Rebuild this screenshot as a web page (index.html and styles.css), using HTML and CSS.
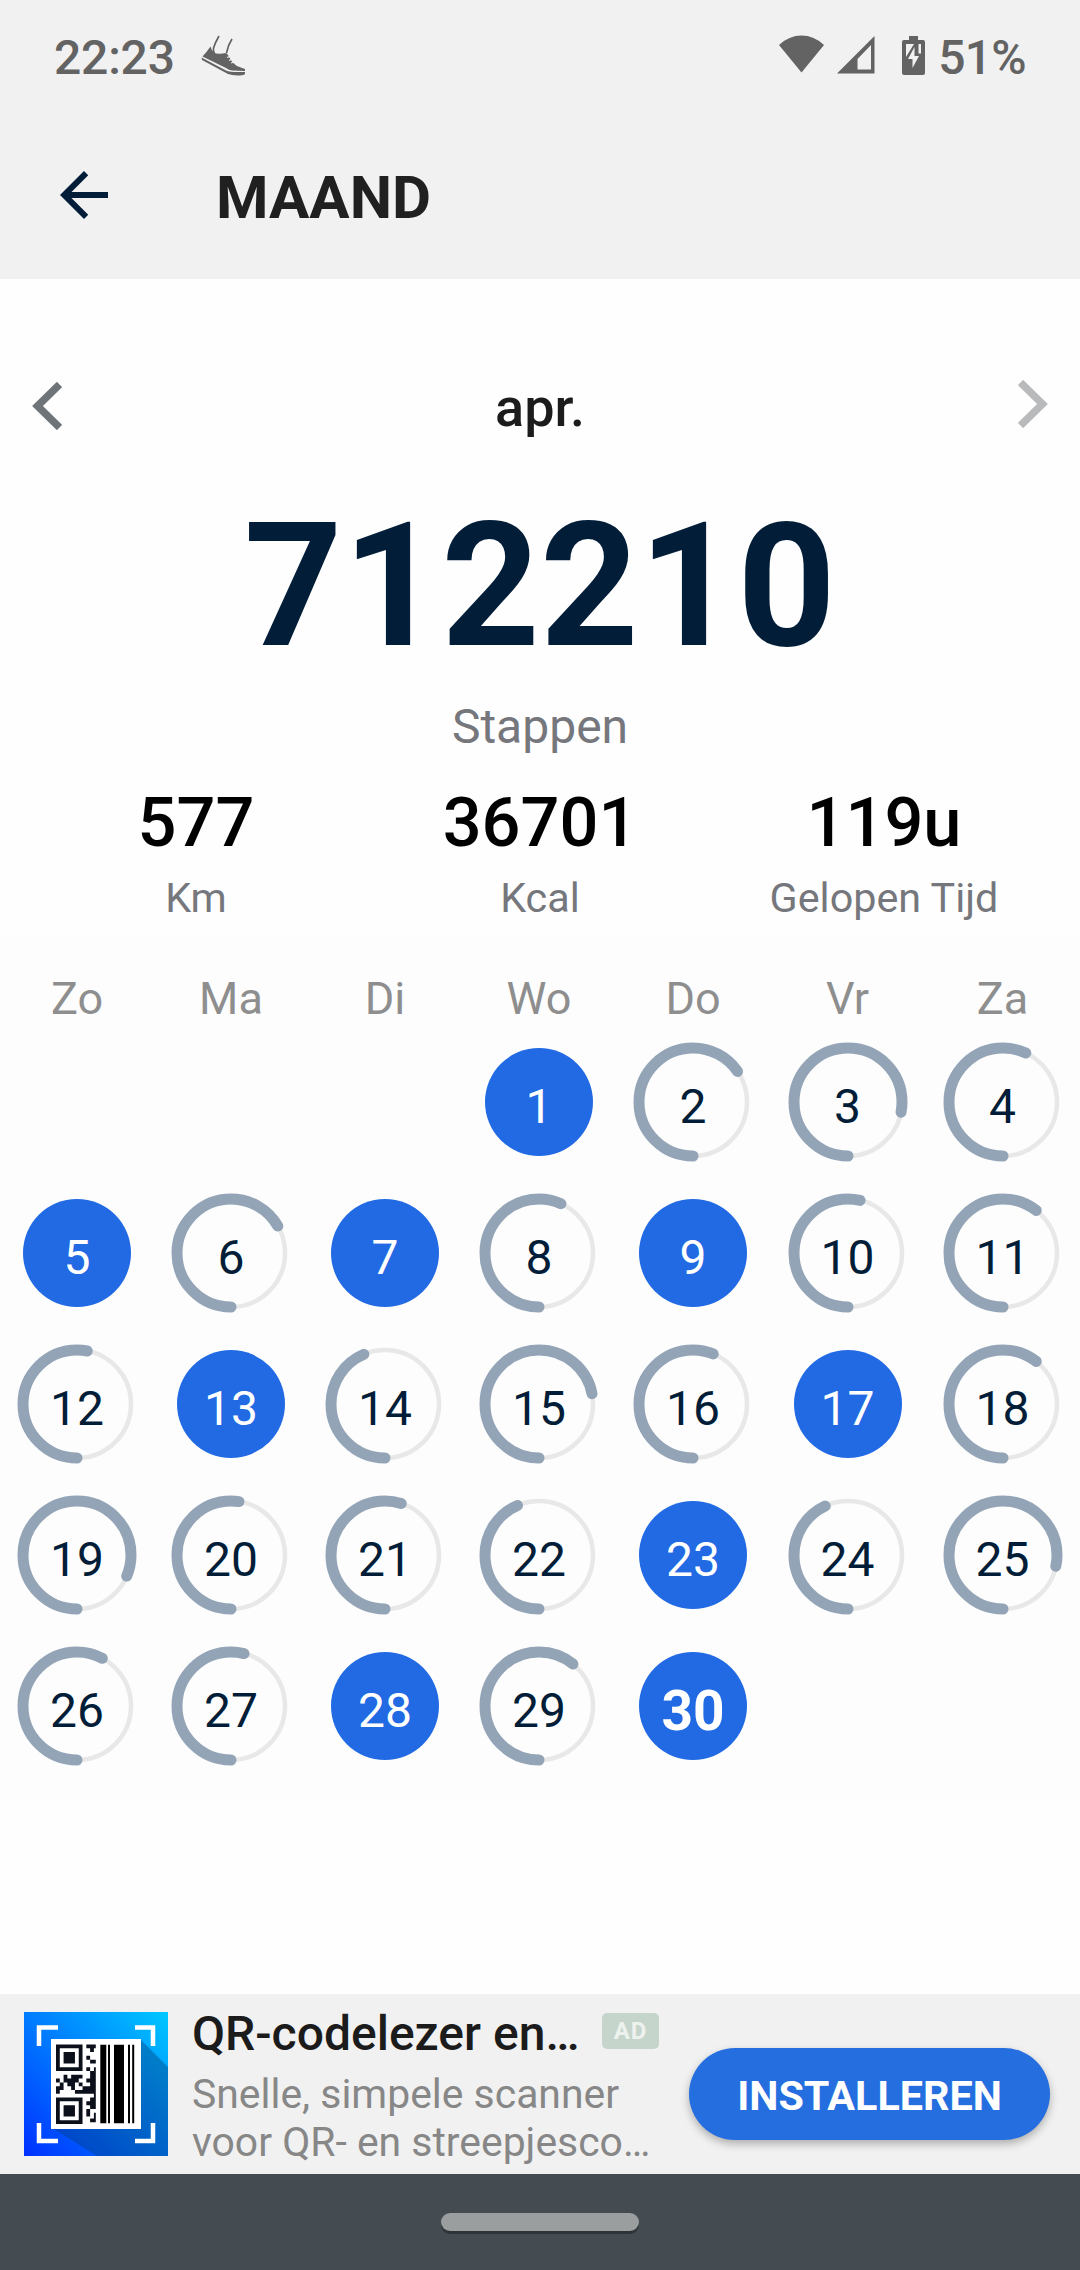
FILE: index.html
```html
<!DOCTYPE html>
<html lang="nl">
<head>
<meta charset="utf-8">
<title>Maand</title>
<link rel="stylesheet" href="styles.css">
</head>
<body>
<header class="top">
  <div class="status">
    <span class="time">22:23</span>
    <svg class="shoe" viewBox="0 0 45 42" width="45" height="42">
      <path d="M18 1Q14 8 12.500 13Q12 16 13.500 18M31 4Q27 10 25.500 18" fill="none" stroke="#636363" stroke-width="1.700"/>
      <path d="M9.500 11.500Q11 17 15 18.500Q20 19 25 18L27 20Q31 28 36 31Q41 33 44 34V36L31 35.500Q28 35 25 33L1.500 21.500Q5 18 9.500 11.500Z" fill="#636363"/>
      <path d="M26 22.500L31 20.500M28 25.500L33 23.500M30 28L35 26.500" stroke="#f1f1f1" stroke-width="1.100"/>
      <path d="M0.500 22.500L25 35.500Q29 37.500 44 37V38.500Q44 40 41 40.300Q32 41 27 39L1 25Z" fill="#636363"/>
    </svg>
    <span class="grow"></span>
    <svg class="wifi" viewBox="0 0 45 38" width="45" height="38"><path d="M0 10Q10 .5 22.500 .5T45 10L22.500 37.500Z" fill="#636363"/></svg>
    <svg class="signal" viewBox="0 0 38 38" width="38" height="38"><path fill-rule="evenodd" d="M37.500 0V37.500H0ZM34 9L20.500 23V33.500H34Z" fill="#636363"/></svg>
    <svg class="battery" viewBox="0 0 23 39" width="23" height="39"><path d="M7 0H16V4H21Q23 4 23 6V37Q23 39 21 39H2Q0 39 0 37V6Q0 4 2 4H7Z" fill="#636363"/><path d="M4 8H12L4 21ZM16.500 8H19V17.500H16.500Z" fill="#f1f1f1"/><path d="M12.500 11V20H17L10.500 32V23H6Z" fill="#f1f1f1"/></svg>
    <span class="pct">51%</span>
  </div>
  <div class="appbar">
    <svg viewBox="0 0 24 24" width="72" height="72"><path d="M20 11H7.830l5.590-5.590L12 4l-8 8 8 8 1.410-1.410L7.830 13H20z" fill="#021d38"/></svg>
    <h1>MAAND</h1>
  </div>
</header>
<main>
  <div class="month">
    <svg class="prev" viewBox="0 0 30 48" width="30" height="48"><path d="M27.500 2.500L5.500 24L27.500 45.500" fill="none" stroke="#6f7479" stroke-width="7.500"/></svg>
    <span>apr.</span>
    <svg class="next" viewBox="0 0 30 48" width="30" height="48"><path d="M2.500 2.500L24.500 24L2.500 45.500" fill="none" stroke="#b9babc" stroke-width="7.500"/></svg>
  </div>
  <div class="total">712210</div>
  <div class="unit">Stappen</div>
  <div class="stats">
    <div><b>577</b><span>Km</span></div>
    <div><b>36701</b><span>Kcal</span></div>
    <div><b>119u</b><span>Gelopen Tijd</span></div>
  </div>
  <section class="calendar">
    <div class="weekdays"><span>Zo</span><span>Ma</span><span>Di</span><span>Wo</span><span>Do</span><span>Vr</span><span>Za</span></div>
    <div class="days">
      <div class="day first full"><span>1</span></div>
      <div class="day"><svg viewBox="-60 -60 120 120"><circle r="54"/><circle class="arc" r="54" pathLength="360" stroke-dasharray="235.500 360"/></svg><span>2</span></div>
      <div class="day"><svg viewBox="-60 -60 120 120"><circle r="54"/><circle class="arc" r="54" pathLength="360" stroke-dasharray="281 360"/></svg><span>3</span></div>
      <div class="day"><svg viewBox="-60 -60 120 120"><circle r="54"/><circle class="arc" r="54" pathLength="360" stroke-dasharray="205 360"/></svg><span>4</span></div>
      <div class="day full"><span>5</span></div>
      <div class="day"><svg viewBox="-60 -60 120 120"><circle r="54"/><circle class="arc" r="54" pathLength="360" stroke-dasharray="240 360"/></svg><span>6</span></div>
      <div class="day full"><span>7</span></div>
      <div class="day"><svg viewBox="-60 -60 120 120"><circle r="54"/><circle class="arc" r="54" pathLength="360" stroke-dasharray="204 360"/></svg><span>8</span></div>
      <div class="day full"><span>9</span></div>
      <div class="day"><svg viewBox="-60 -60 120 120"><circle r="54"/><circle class="arc" r="54" pathLength="360" stroke-dasharray="193 360"/></svg><span>10</span></div>
      <div class="day"><svg viewBox="-60 -60 120 120"><circle r="54"/><circle class="arc" r="54" pathLength="360" stroke-dasharray="218 360"/></svg><span>11</span></div>
      <div class="day"><svg viewBox="-60 -60 120 120"><circle r="54"/><circle class="arc" r="54" pathLength="360" stroke-dasharray="191 360"/></svg><span>12</span></div>
      <div class="day full"><span>13</span></div>
      <div class="day"><svg viewBox="-60 -60 120 120"><circle r="54"/><circle class="arc" r="54" pathLength="360" stroke-dasharray="157 360"/></svg><span>14</span></div>
      <div class="day"><svg viewBox="-60 -60 120 120"><circle r="54"/><circle class="arc" r="54" pathLength="360" stroke-dasharray="259 360"/></svg><span>15</span></div>
      <div class="day"><svg viewBox="-60 -60 120 120"><circle r="54"/><circle class="arc" r="54" pathLength="360" stroke-dasharray="202 360"/></svg><span>16</span></div>
      <div class="day full"><span>17</span></div>
      <div class="day"><svg viewBox="-60 -60 120 120"><circle r="54"/><circle class="arc" r="54" pathLength="360" stroke-dasharray="218 360"/></svg><span>18</span></div>
      <div class="day"><svg viewBox="-60 -60 120 120"><circle r="54"/><circle class="arc" r="54" pathLength="360" stroke-dasharray="293 360"/></svg><span>19</span></div>
      <div class="day"><svg viewBox="-60 -60 120 120"><circle r="54"/><circle class="arc" r="54" pathLength="360" stroke-dasharray="188.500 360"/></svg><span>20</span></div>
      <div class="day"><svg viewBox="-60 -60 120 120"><circle r="54"/><circle class="arc" r="54" pathLength="360" stroke-dasharray="197.500 360"/></svg><span>21</span></div>
      <div class="day"><svg viewBox="-60 -60 120 120"><circle r="54"/><circle class="arc" r="54" pathLength="360" stroke-dasharray="156.500 360"/></svg><span>22</span></div>
      <div class="day full"><span>23</span></div>
      <div class="day"><svg viewBox="-60 -60 120 120"><circle r="54"/><circle class="arc" r="54" pathLength="360" stroke-dasharray="155 360"/></svg><span>24</span></div>
      <div class="day"><svg viewBox="-60 -60 120 120"><circle r="54"/><circle class="arc" r="54" pathLength="360" stroke-dasharray="282 360"/></svg><span>25</span></div>
      <div class="day"><svg viewBox="-60 -60 120 120"><circle r="54"/><circle class="arc" r="54" pathLength="360" stroke-dasharray="208 360"/></svg><span>26</span></div>
      <div class="day"><svg viewBox="-60 -60 120 120"><circle r="54"/><circle class="arc" r="54" pathLength="360" stroke-dasharray="194 360"/></svg><span>27</span></div>
      <div class="day full"><span>28</span></div>
      <div class="day"><svg viewBox="-60 -60 120 120"><circle r="54"/><circle class="arc" r="54" pathLength="360" stroke-dasharray="219 360"/></svg><span>29</span></div>
      <div class="day full today"><span>30</span></div>
    </div>
  </section>
</main>
<aside class="ad">
  <svg class="adicon" viewBox="0 0 144 144" width="144" height="144">
    <defs><linearGradient id="g" x1="0" y1="1" x2="1" y2="0"><stop offset="0" stop-color="#0030ff"/><stop offset="1" stop-color="#00c8ff"/></linearGradient></defs>
    <rect width="144" height="144" fill="url(#g)"/>
    <path d="M117 28L144 55V144H73L28 116Z" fill="#003c78" fill-opacity=".4"/>
    <path d="M15 34V15.500H34M111 15.500H129V34M15 111V129H34M111 129H129V111" fill="none" stroke="#fff" stroke-width="4.500"/>
    <rect x="27" y="27" width="90" height="90" fill="#fff"/>
    <!-- QR modules on an 11 x 21 grid -->
    <g transform="translate(32 32.500) scale(3.790)" fill="#0b101a">
      <path fill-rule="evenodd" d="M0 0h7v7h-7zM1 1v5h5v-5zM2 2h3v3h-3zM0 14h7v7h-7zM1 15v5h5v-5zM2 16h3v3h-3z"/>
      <path d="M8 0h2.500v1h-.5v1h-1v-1h-1zM8 3h1v1h1.500v1h-1.500v-1h-1zM8 6h1v1h-1zM10 6h.5v2h-1.500v-1h1zM2 8h1v1h1v-1h3v1h-1v1h1v1h-1v-1h-1v1h-2v-1h-1v1h-1v-1h-1v-1h1v1h1zM8 9h1v-1h1.500v9h-.5v-1h-2v-1h1v-1h1v-1h-5v-1h-1v-1h1v1h2v-1h2v-1h-1zM0 11h2v1h-1v1h-1v-1h0zM9 16h1v1h-1v1h-1v-1h1zM8 18h1v1h-1zM10 18h.5v2.500h-1.500v-1h1z"/>
    </g>
    <path d="M76.300 32.800h6v78.500h-6zM84 32.800h2v78.500h-2zM90 32.800h10v78.500h-10zM104 32.800h2v78.500h-2zM108.200 32.800h2v78.500h-2z"/>
  </svg>
  <div class="adtext">
    <div class="adtitle"><span>QR-codelezer en…</span><em>AD</em></div>
    <p>Snelle, simpele scanner<br>voor QR- en streepjesco…</p>
  </div>
  <a class="install">INSTALLEREN</a>
</aside>
<nav class="navbar"><i></i></nav>
</body>
</html>
```

FILE: styles.css
```css
* { box-sizing: border-box; }
body { margin: 0; width: 1080px; height: 2270px; display: flex; flex-direction: column; background: #fff; font-family: Roboto, "Liberation Sans", sans-serif; overflow: hidden; }
svg { display: block; flex: none; }
.top { height: 279px; background: #f1f1f1; }
.status { height: 115px; padding: 0 54px 0 54px; display: flex; align-items: flex-start; color: #636363; font-size: 48px; font-weight: 500; line-height: 56px; letter-spacing: -.7px; }
.status span { margin-top: 30px; }
.status .time { letter-spacing: -.2px; }
.shoe { margin: 35px 0 0 26px; }
.grow { flex: 1; }
.wifi { margin-top: 35px; }
.signal { margin: 36px 0 0 13px; }
.battery { margin: 36px 13px 0 27px; }
.appbar { height: 164px; display: flex; align-items: center; padding: 0 0 4px 48px; }
.appbar h1 { margin: 6px 0 0 96px; font-size: 60px; line-height: 70px; font-weight: 700; color: #202020; }
main { height: 1715px; background: #fefefe; }
.month { height: 190px; padding: 101px 32px 0; display: flex; justify-content: space-between; align-items: flex-start; }
.month span { font-size: 54px; line-height: 64px; font-weight: 500; color: #1c1c1c; margin-top: -4px; }
.prev { margin-top: 2px; }
.total { height: 202px; line-height: 202px; font-size: 172px; font-weight: 700; color: #021d38; text-align: center; margin-top: 16px; }
.unit { height: 56px; line-height: 56px; margin-top: 12px; font-size: 48px; color: #75777c; text-align: center; }
.stats { display: grid; grid-template-columns: repeat(3, 344px); justify-content: center; height: 180px; padding-top: 28px; text-align: center; }
.stats b { display: block; font-size: 68.5px; line-height: 80px; font-weight: 500; color: #000; }
.stats span { display: block; font-size: 41.3px; line-height: 50px; margin-top: 10px; color: #75777c; }
.calendar { height: 866px; background: #fdfdfd; }
.weekdays, .days { display: grid; grid-template-columns: repeat(5, 154px) 155px 155px; text-align: center; }
.weekdays { height: 91px; padding-top: 37px; font-size: 45px; line-height: 54px; color: #8e8e8e; }
.days { grid-auto-rows: 151px; }
.first { grid-column: 4; }
.day { display: grid; place-items: center; font-size: 48px; line-height: 56px; color: #021d38; }
.day > * { grid-area: 1 / 1; }
.day svg { width: 120px; height: 120px; }
.day svg circle { fill: none; stroke: #e8e8e8; stroke-width: 4.5; }
.day svg .arc { stroke: #94a4b7; stroke-width: 11; stroke-linecap: round; transform: rotate(90deg); }
.day span { padding-top: 11px; }
.full::before { content: ""; grid-area: 1 / 1; width: 108px; height: 108px; border-radius: 50%; background: #216ae4; }
.full { color: #fff; }
.today { font-size: 55px; font-weight: 700; }
.ad { height: 180px; background: #f1f1f1; display: flex; padding: 18px 30px 0 24px; }
.adtext { width: 496px; margin: 0 0 0 24px; }
.adtitle { display: flex; justify-content: space-between; width: 467px; font-size: 48px; line-height: 56px; height: 56px; font-weight: 500; color: #1b1b1b; margin-top: -6px; }
.adtitle em { margin-top: 7px; width: 57px; height: 36px; border-radius: 5px; background: #c6d5cb; color: #edf2ee; font: 700 24px/37px Roboto, sans-serif; text-align: center; letter-spacing: 1px; }
.adtext p { margin: 8px 0 0; font-size: 40.9px; line-height: 48px; color: #878787; white-space: nowrap; }
.install { flex: none; margin: 36px 0 0 1px; width: 361px; height: 92px; border-radius: 46px; background: #256ee0; color: #fff; font-size: 41.3px; line-height: 96px; font-weight: 700; text-align: center; box-shadow: 0 4px 8px rgba(0,0,0,.28); }
.navbar { height: 96px; background: #454c51; display: flex; justify-content: center; padding-top: 39px; }
.navbar i { width: 198px; height: 18px; border-radius: 9px; background: #9a9e9f; box-shadow: 0 3px 0 #2e3437; }
```
